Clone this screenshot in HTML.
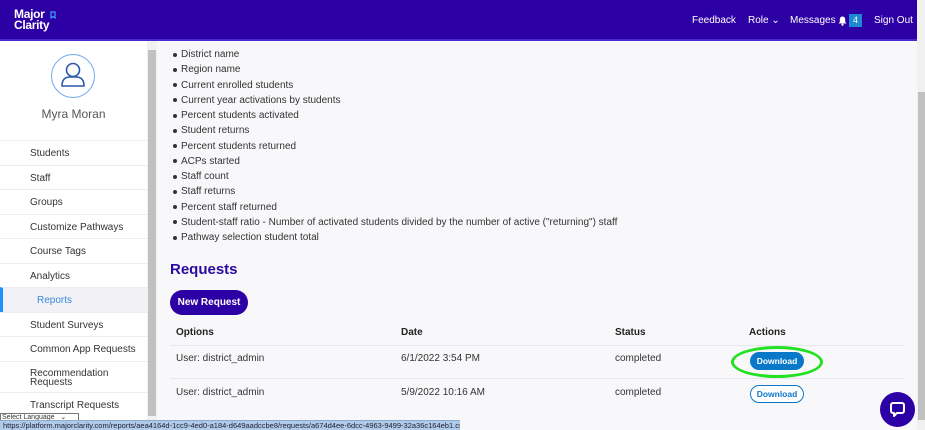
<!DOCTYPE html>
<html><head><meta charset="utf-8"><style>
*{box-sizing:border-box;margin:0;padding:0}
body{width:925px;height:430px;overflow:hidden;background:#f8f8fb;font-family:"Liberation Sans",sans-serif;color:#333;position:relative}
.hdr{position:absolute;left:0;top:0;width:917px;height:41px;background:#2c00a5;border-bottom:2px solid #4a2ad0}
.logo{position:absolute;left:14px;top:9px;color:#fff;font-weight:bold;font-size:12px;line-height:11px;letter-spacing:-0.3px}
.nav{position:absolute;top:15px;color:#fff;font-size:10px}
.badge{position:absolute;left:849px;top:14px;width:13px;height:13px;background:#1e88d0;color:#fff;font-size:9px;text-align:center;line-height:13px}
.side{position:absolute;left:0;top:41px;width:147px;height:389px;background:#fff}
.sscroll{position:absolute;left:147px;top:41px;width:10px;height:380px;background:#f1f1f1}
.sthumb{position:absolute;left:148px;top:50px;width:8px;height:366px;background:#c1c1c1}
.item{position:absolute;left:0;width:147px;height:24.5px;border-top:1px solid #ececf2;font-size:10px;color:#333;padding-left:30px;line-height:26px}
.wscroll{position:absolute;left:917px;top:0;width:8px;height:430px;background:#f1f1f1}
.wthumb{position:absolute;left:918px;top:92px;width:7px;height:328px;background:#c1c1c1}
ul{position:absolute;left:181px;top:47px;font-size:10px;line-height:15.25px;color:#333;list-style:none}
ul li::before{content:"";position:absolute;left:-8px;width:4px;height:4px;background:#333;border-radius:50%;margin-top:5.5px}
h2{position:absolute;left:170px;top:261px;font-size:15px;color:#2a0aa0;font-weight:bold}
.nr{position:absolute;left:170px;top:290px;width:78px;height:25px;border-radius:13px;background:#2c00a5;color:#fff;font-size:10px;font-weight:bold;text-align:center;line-height:25px}
.t{position:absolute;font-size:10px}
.th{font-weight:bold;color:#222}
.line{position:absolute;left:170px;width:734px;height:1px;background:#e6e6ec}
.dl{position:absolute;left:750px;width:54px;height:18px;border-radius:9px;font-size:8.5px;font-weight:bold;text-align:center;line-height:16px;border:1px solid #0a78c8}
</style></head><body>
<div class="hdr">
<div class="logo">Major<br>Clarity</div>
<svg style="position:absolute;left:50px;top:11px" width="6" height="8" viewBox="0 0 6 8"><path d="M1 1 H5 V7 L3 5.5 L1 7 Z" fill="none" stroke="#3aa0ff" stroke-width="1.2"/></svg>
<div class="nav" style="left:692px">Feedback</div>
<div class="nav" style="left:748px">Role ⌄</div>
<div class="nav" style="left:790px">Messages</div>
<svg style="position:absolute;left:838px;top:16px" width="9" height="10" viewBox="0 0 9 10"><path d="M4.5 0.5 C2.5 0.5 1.8 2 1.8 3.8 V6 L0.5 7.5 H8.5 L7.2 6 V3.8 C7.2 2 6.5 0.5 4.5 0.5 Z" fill="#fff"/><circle cx="4.5" cy="8.7" r="1.1" fill="#fff"/></svg>
<div class="badge">4</div>
<div class="nav" style="left:874px">Sign Out</div>
</div>
<div class="side">
<svg style="position:absolute;left:50px;top:12px" width="46" height="46" viewBox="0 0 46 46"><circle cx="23" cy="23" r="21.5" fill="none" stroke="#6aa8f0" stroke-width="1"/><circle cx="23" cy="17" r="6.5" fill="none" stroke="#2a58a8" stroke-width="1.6"/><path d="M12 33 C12 25 17 24 20 24 L26 24 C29 24 34 25 34 33 Z" fill="none" stroke="#2a58a8" stroke-width="1.6" stroke-linejoin="round"/></svg>
<div style="position:absolute;left:0;width:147px;top:66px;text-align:center;font-size:12px;color:#555">Myra Moran</div>
</div>
<div class="item" style="top:140px">Students</div>
<div class="item" style="top:164.5px">Staff</div>
<div class="item" style="top:189px">Groups</div>
<div class="item" style="top:213.5px">Customize Pathways</div>
<div class="item" style="top:238px">Course Tags</div>
<div class="item" style="top:262.5px">Analytics</div>
<div class="item" style="top:287px;background:#f1f1f6;color:#3a8ad8;padding-left:34px;border-left:3px solid #1e90ff">Reports</div>
<div class="item" style="top:311.5px">Student Surveys</div>
<div class="item" style="top:336px">Common App Requests</div>
<div class="item" style="top:360.5px;height:31px;line-height:9px;padding-top:7px">Recommendation<br>Requests</div>
<div class="item" style="top:391.5px">Transcript Requests</div>
<div style="position:absolute;left:0;top:413px;width:79px;height:9px;border:1px solid #777;background:#fff;font-size:7px;line-height:7px;padding-left:1px">Select Language &nbsp; ⌄</div>
<div class="sscroll"></div><div class="sthumb"></div>
<ul>
<li>District name</li><li>Region name</li><li>Current enrolled students</li><li>Current year activations by students</li><li>Percent students activated</li><li>Student returns</li><li>Percent students returned</li><li>ACPs started</li><li>Staff count</li><li>Staff returns</li><li>Percent staff returned</li><li>Student-staff ratio - Number of activated students divided by the number of active ("returning") staff</li><li>Pathway selection student total</li>
</ul>
<h2>Requests</h2>
<div class="nr">New Request</div>
<div class="t th" style="left:176px;top:327px">Options</div>
<div class="t th" style="left:401px;top:327px">Date</div>
<div class="t th" style="left:615px;top:327px">Status</div>
<div class="t th" style="left:749px;top:327px">Actions</div>
<div class="line" style="top:345px"></div>
<div class="t" style="left:176px;top:353px">User: district_admin</div>
<div class="t" style="left:401px;top:353px">6/1/2022 3:54 PM</div>
<div class="t" style="left:615px;top:353px">completed</div>
<div class="line" style="top:378px"></div>
<div class="t" style="left:176px;top:387px">User: district_admin</div>
<div class="t" style="left:401px;top:387px">5/9/2022 10:16 AM</div>
<div class="t" style="left:615px;top:387px">completed</div>
<div class="dl" style="top:352px;background:#0a78c8;color:#fff">Download</div>
<div class="dl" style="top:385px;background:#fff;color:#0a78c8">Download</div>
<div style="position:absolute;left:731px;top:346px;width:92px;height:32px;border:3px solid #22e022;border-radius:50%"></div>
<div style="position:absolute;left:880px;top:392px;width:35px;height:35px;border-radius:50%;background:#2c00a5"></div>
<svg style="position:absolute;left:889px;top:401px" width="17" height="17" viewBox="0 0 17 17"><path d="M4 2 H13 A2 2 0 0 1 15 4 V10 A2 2 0 0 1 13 12 H8 L5 15 V12 H4 A2 2 0 0 1 2 10 V4 A2 2 0 0 1 4 2 Z" fill="none" stroke="#fff" stroke-width="2" stroke-linejoin="round"/></svg>
<div class="wscroll"></div><div class="wthumb"></div>
<div style="position:absolute;left:0;top:420px;width:460px;height:10px;background:#b0cbea;font-size:7.5px;line-height:10px;color:#223;padding-left:3px;border-top:1px solid #8aaad0;white-space:nowrap;overflow:hidden">https://platform.majorclarity.com/reports/aea4164d-1cc9-4ed0-a184-d649aadccbe8/requests/a674d4ee-6dcc-4963-9499-32a36c164eb1.csv</div>
</body></html>
